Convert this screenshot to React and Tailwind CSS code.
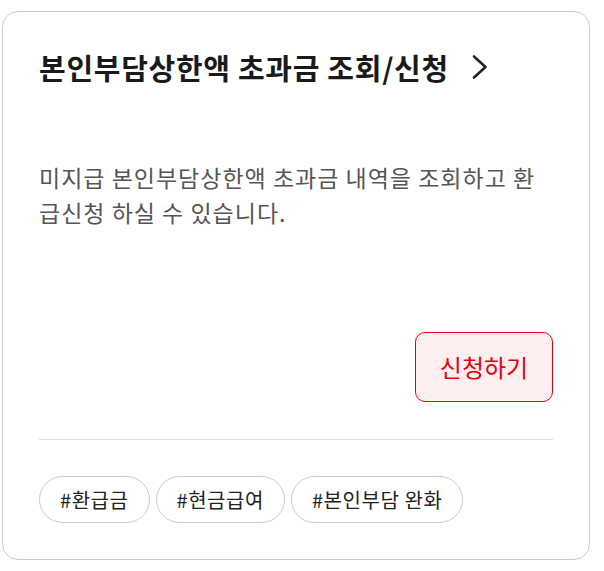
import React from "react";

export default function App() {
  const font = { fontFamily: '"Noto Sans CJK KR", "Noto Sans", sans-serif' };
  return (
    <div className="w-[604px] h-[571px] bg-white pt-[11px] pl-[2px]" style={font}>
      <div className="w-[588px] h-[549px] border border-[#cccccc] rounded-[16px] px-9 pt-[37px] pb-9 flex flex-col">
        <div className="flex items-center h-[36px]">
          <span className="text-[29px] leading-[36px] font-bold text-[#1a1a1a] tracking-[0.7px] whitespace-nowrap">
            본인부담상한액 초과금 조회/신청
          </span>
          <svg className="ml-[21px]" width="20" height="26" viewBox="0 0 20 26" fill="none">
            <path d="M4 2.5 L15.5 13 L4 23.5" stroke="#222" strokeWidth="2.6" strokeLinecap="round" strokeLinejoin="round" />
          </svg>
        </div>
        <p className="mt-[75px] text-[23px] leading-[35px] text-[#555555] tracking-[1px] whitespace-nowrap">
          미지급 본인부담상한액 초과금 내역을 조회하고 환
          <br />
          급신청 하실 수 있습니다.
        </p>
        <div className="flex-1" />
        <div className="flex justify-end">
          <button className="w-[138px] h-[70px] rounded-[10px] border border-[#e60012] bg-[#fdeff0] text-[#e60012] text-[24px]">
            신청하기
          </button>
        </div>
        <div className="mt-[37px] h-px bg-[#dddddd]" />
        <div className="mt-[36px] flex gap-[6px]">
          {["#환급금", "#현금급여", "#본인부담 완화"].map((t) => (
            <span
              key={t}
              className="h-[47px] px-[20px] rounded-full border border-[#cccccc] flex items-center text-[20px] tracking-[0.55px] text-[#222222] whitespace-nowrap"
            >
              {t}
            </span>
          ))}
        </div>
      </div>
    </div>
  );
}
